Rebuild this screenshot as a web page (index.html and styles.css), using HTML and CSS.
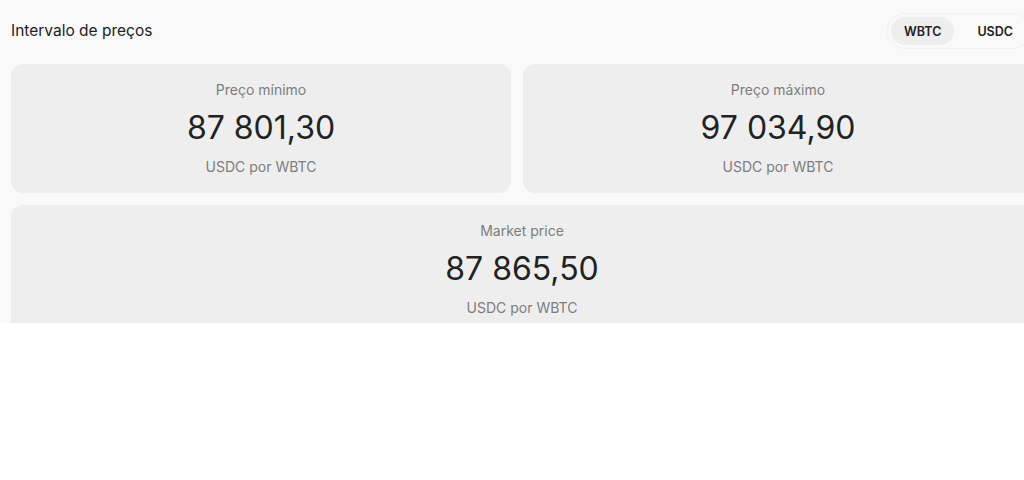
FILE: index.html
```html
<!DOCTYPE html>
<html lang="pt">
<head>
<meta charset="utf-8">
<title>Intervalo de preços</title>
<link rel="stylesheet" href="styles.css">
</head>
<body>
<div class="frame">
  <div class="panel">
    <div class="header">
      <h2 class="title">Intervalo de preços</h2>
      <div class="toggle">
        <button class="toggle-btn active">WBTC</button>
        <button class="toggle-btn">USDC</button>
      </div>
    </div>
    <div class="row">
      <div class="card">
        <div class="label">Preço mínimo</div>
        <div class="value">87 801,30</div>
        <div class="unit">USDC por WBTC</div>
      </div>
      <div class="card">
        <div class="label">Preço máximo</div>
        <div class="value">97 034,90</div>
        <div class="unit">USDC por WBTC</div>
      </div>
    </div>
    <div class="card">
      <div class="label">Market price</div>
      <div class="value">87 865,50</div>
      <div class="unit">USDC por WBTC</div>
    </div>
  </div>
</div>
</body>
</html>
```

FILE: styles.css
```css
* { box-sizing: border-box; }
html, body {
  margin: 0;
  padding: 0;
  background: #ffffff;
  overflow: hidden;
}
body {
  font-family: Inter, "Noto Sans", sans-serif;
  color: #222222;
}
.frame {
  height: 323px;
  overflow: hidden;
  background: #f9f9f9;
}
.panel {
  width: 1044px;
  padding: 0 11px;
  display: flex;
  flex-direction: column;
  gap: 12px;
}
.header {
  display: flex;
  align-items: center;
  justify-content: space-between;
  height: 52px;
  padding-top: 10px;
}
.title {
  margin: 0;
  font-size: 15.5px;
  font-weight: 400;
  line-height: 20px;
  color: #222222;
}
.toggle {
  display: flex;
  align-items: center;
  gap: 10px;
  height: 36px;
  padding: 3px;
  margin-right: 3px;
  border: 1px solid #f0f0f0;
  border-radius: 18px;
  background: #f9f9f9;
}
.toggle-btn {
  font-family: inherit;
  font-size: 12.5px;
  font-weight: 600;
  color: #222222;
  border: none;
  background: transparent;
  height: 28px;
  padding: 0 13px;
  border-radius: 14px;
  cursor: pointer;
}
.toggle-btn.active {
  background: #eeeeee;
}
.row {
  display: grid;
  grid-template-columns: 500px 1fr;
  gap: 12px;
}
.card {
  background: #eeeeee;
  border-radius: 12px;
  padding: 16px;
  display: flex;
  flex-direction: column;
  align-items: center;
}
.label, .unit {
  font-size: 14px;
  line-height: 20px;
  color: #7d7d7d;
}
.value {
  font-size: 32px;
  line-height: 40px;
  margin: 8px 0 9px;
  color: #222222;
}
```
